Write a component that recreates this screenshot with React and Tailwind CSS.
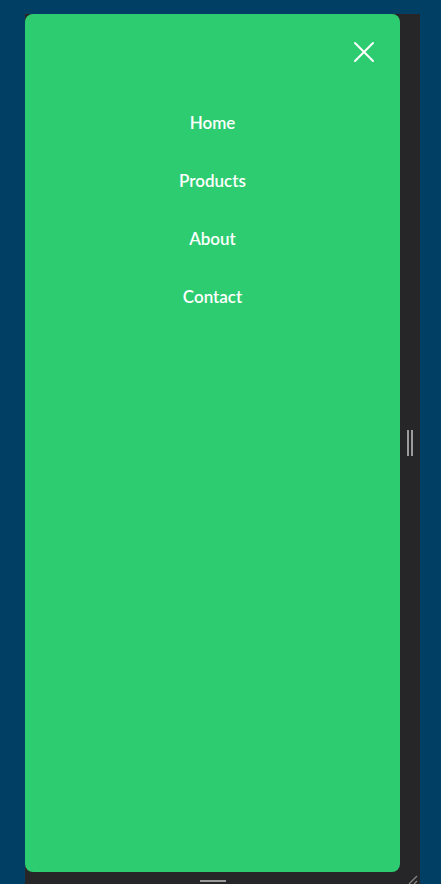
import { X } from "lucide-react";

const links = ["Home", "Products", "About", "Contact"];

export default function App() {
  return (
    <div className="w-[441px] h-[884px] bg-[#023f64] overflow-hidden pt-[14px] pl-[25px]">
      <div className="w-[395px] h-[870px] bg-[#262629] flex flex-col">
        <div className="flex">
          {/* menu drawer */}
          <div className="w-[375px] h-[858px] bg-[#2ecc71] rounded-lg flex flex-col">
            <div className="flex justify-end pt-[20px] pr-[18px]">
              <X size={36} strokeWidth={2} absoluteStrokeWidth className="text-white" />
            </div>
            <nav
              className="flex flex-col items-center gap-[33px] mt-[40px] text-white text-[17px] font-semibold"
              style={{ fontFamily: "Lato, 'Noto Sans', sans-serif" }}
            >
              {links.map((l) => (
                <a key={l} className="leading-[25px]">
                  {l}
                </a>
              ))}
            </nav>
          </div>
          {/* side resize handle */}
          <div className="flex-1 flex items-center justify-center">
            <div className="flex gap-[2px]">
              <div className="w-[2px] h-[26px] bg-[#9b9b9b]" />
              <div className="w-[2px] h-[26px] bg-[#9b9b9b]" />
            </div>
          </div>
        </div>
        {/* bottom handle */}
        <div className="relative flex-1 flex">
          <div className="w-[375px] flex justify-center items-end">
            <div className="w-[26px] h-[2px] bg-[#9b9b9b] mb-[2px]" />
          </div>
          <svg className="absolute right-[2px] bottom-0" width="12" height="10" viewBox="0 0 12 10">
            <path d="M3 10 L11 2 M8 10 L11 7" stroke="#8a8a8a" strokeWidth="1.2" />
          </svg>
        </div>
      </div>
    </div>
  );
}
